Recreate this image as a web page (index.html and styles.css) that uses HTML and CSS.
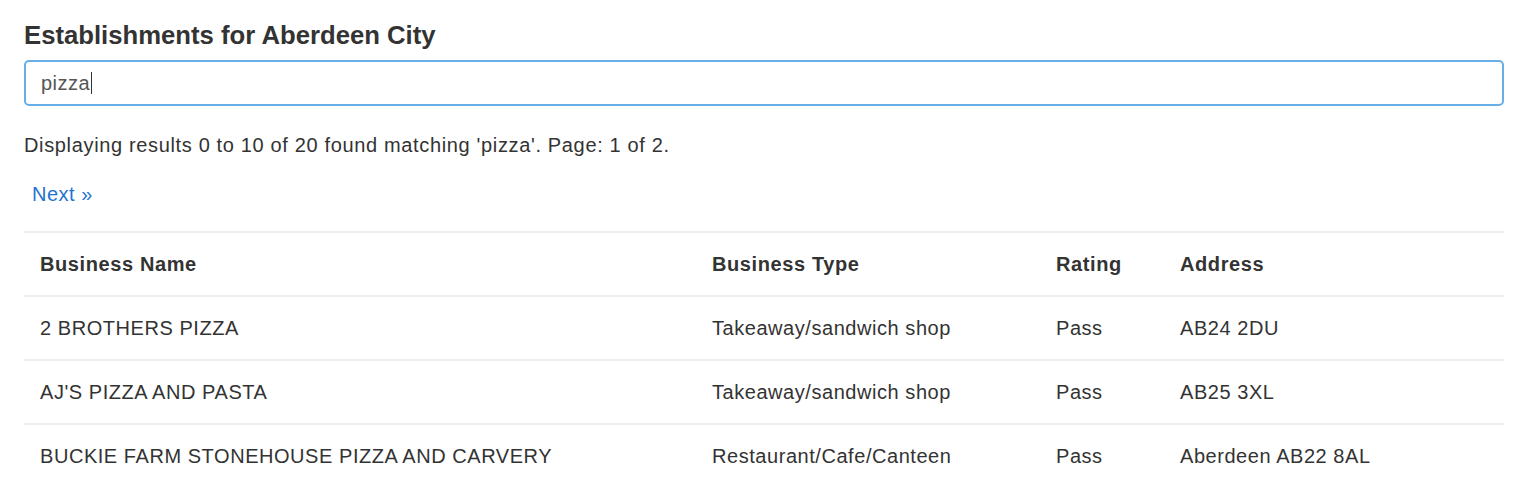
FILE: index.html
```html
<!DOCTYPE html>
<html lang="en">
<head>
    <meta charset="UTF-8">
    <meta name="viewport" content="width=device-width, initial-scale=1.0">
    <title>Establishments</title>
    <link rel="stylesheet" href="styles.css">
</head>
<body>
    <div class="container">
        <h2 class="title">Establishments for Aberdeen City</h2>
        <div class="search-box">
            <span class="search-value">pizza</span><span class="caret"></span>
        </div>
        <p class="summary">Displaying results 0 to 10 of 20 found matching 'pizza'. Page: 1 of 2.</p>
        <div class="pager">
            <a href="#" class="next-link">Next &raquo;</a>
        </div>
        <table class="results">
            <thead>
                <tr>
                    <th class="col-name">Business Name</th>
                    <th class="col-type">Business Type</th>
                    <th class="col-rating">Rating</th>
                    <th>Address</th>
                </tr>
            </thead>
            <tbody>
                <tr>
                    <td>2 BROTHERS PIZZA</td>
                    <td>Takeaway/sandwich shop</td>
                    <td>Pass</td>
                    <td>AB24 2DU</td>
                </tr>
                <tr>
                    <td>AJ'S PIZZA AND PASTA</td>
                    <td>Takeaway/sandwich shop</td>
                    <td>Pass</td>
                    <td>AB25 3XL</td>
                </tr>
                <tr>
                    <td>BUCKIE FARM STONEHOUSE PIZZA AND CARVERY</td>
                    <td>Restaurant/Cafe/Canteen</td>
                    <td>Pass</td>
                    <td>Aberdeen AB22 8AL</td>
                </tr>
            </tbody>
        </table>
    </div>
</body>
</html>
```

FILE: styles.css
```css
body {
    font-family: "Liberation Sans", Arial, sans-serif;
    margin: 0;
    padding: 0;
    background-color: #fff;
    color: #333;
}
.container {
    padding: 0 36px 0 24px;
}
.title {
    font-size: 25.7px;
    font-weight: bold;
    line-height: 32px;
    margin: 0;
    padding-top: 19px;
    color: #333;
}
.search-box {
    margin-top: 9px;
    height: 42px;
    border: 2px solid #66afe9;
    border-radius: 5px;
    padding: 0 15px;
    display: flex;
    align-items: center;
    font-size: 20px;
    letter-spacing: 0.5px;
    color: #555;
}
.caret {
    display: inline-block;
    width: 1px;
    height: 22px;
    background-color: #333;
    margin-left: 1px;
}
.summary {
    font-size: 20px;
    line-height: 28px;
    letter-spacing: 0.65px;
    margin: 25px 0 0 0;
}
.pager {
    padding: 21px 8px 0 8px;
    height: 51px;
}
.next-link {
    font-size: 20px;
    line-height: 28px;
    letter-spacing: 0.5px;
    color: #1f74d0;
    text-decoration: none;
}
.results {
    width: 100%;
    border-collapse: collapse;
    font-size: 20px;
    letter-spacing: 0.55px;
}
.results th,
.results td {
    text-align: left;
    padding: 17px 16px;
    line-height: 28px;
    border-top: 2px solid #eee;
}
.results th {
    font-weight: bold;
    letter-spacing: 0.6px;
}
.col-name {
    width: 640px;
}
.col-type {
    width: 312px;
}
.col-rating {
    width: 92px;
}
```
